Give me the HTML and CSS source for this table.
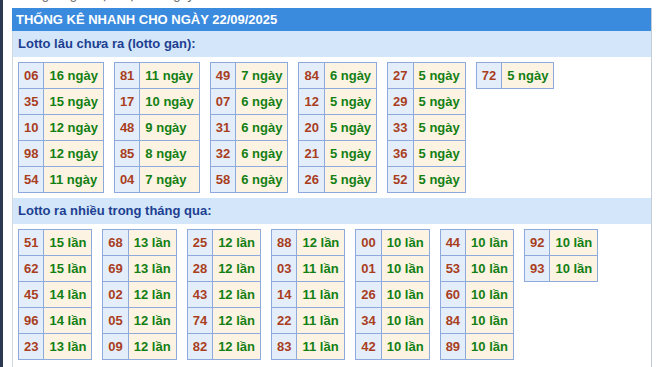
FILE: index.html
```html
<!DOCTYPE html>
<html lang="vi">
<head>
<meta charset="utf-8">
<title>Thống kê nhanh</title>
<link rel="stylesheet" href="styles.css">
</head>
<body>
<div class="page">
  <div class="sidebar"></div>
  <div class="main">
    <div class="topline"><span>Thống kê giải đặc biệt MB ngày</span></div>
    <div class="panel">
      <div class="panel-title">THỐNG KÊ NHANH CHO NGÀY 22/09/2025</div>
      <div class="sub-title">Lotto lâu chưa ra (lotto gan):</div>
      <div class="tables">
        <table class="lt"><tr><td class="n">06</td><td class="v">16 ngày</td></tr><tr><td class="n">35</td><td class="v">15 ngày</td></tr><tr><td class="n">10</td><td class="v">12 ngày</td></tr><tr><td class="n">98</td><td class="v">12 ngày</td></tr><tr><td class="n">54</td><td class="v">11 ngày</td></tr></table>
        <table class="lt"><tr><td class="n">81</td><td class="v">11 ngày</td></tr><tr><td class="n">17</td><td class="v">10 ngày</td></tr><tr><td class="n">48</td><td class="v">9 ngày</td></tr><tr><td class="n">85</td><td class="v">8 ngày</td></tr><tr><td class="n">04</td><td class="v">7 ngày</td></tr></table>
        <table class="lt"><tr><td class="n">49</td><td class="v">7 ngày</td></tr><tr><td class="n">07</td><td class="v">6 ngày</td></tr><tr><td class="n">31</td><td class="v">6 ngày</td></tr><tr><td class="n">32</td><td class="v">6 ngày</td></tr><tr><td class="n">58</td><td class="v">6 ngày</td></tr></table>
        <table class="lt"><tr><td class="n">84</td><td class="v">6 ngày</td></tr><tr><td class="n">12</td><td class="v">5 ngày</td></tr><tr><td class="n">20</td><td class="v">5 ngày</td></tr><tr><td class="n">21</td><td class="v">5 ngày</td></tr><tr><td class="n">26</td><td class="v">5 ngày</td></tr></table>
        <table class="lt"><tr><td class="n">27</td><td class="v">5 ngày</td></tr><tr><td class="n">29</td><td class="v">5 ngày</td></tr><tr><td class="n">33</td><td class="v">5 ngày</td></tr><tr><td class="n">36</td><td class="v">5 ngày</td></tr><tr><td class="n">52</td><td class="v">5 ngày</td></tr></table>
        <table class="lt"><tr><td class="n">72</td><td class="v">5 ngày</td></tr></table>
      </div>
      <div class="sub-title">Lotto ra nhiều trong tháng qua:</div>
      <div class="tables">
        <table class="lt"><tr><td class="n">51</td><td class="v">15 lần</td></tr><tr><td class="n">62</td><td class="v">15 lần</td></tr><tr><td class="n">45</td><td class="v">14 lần</td></tr><tr><td class="n">96</td><td class="v">14 lần</td></tr><tr><td class="n">23</td><td class="v">13 lần</td></tr></table>
        <table class="lt"><tr><td class="n">68</td><td class="v">13 lần</td></tr><tr><td class="n">69</td><td class="v">13 lần</td></tr><tr><td class="n">02</td><td class="v">12 lần</td></tr><tr><td class="n">05</td><td class="v">12 lần</td></tr><tr><td class="n">09</td><td class="v">12 lần</td></tr></table>
        <table class="lt"><tr><td class="n">25</td><td class="v">12 lần</td></tr><tr><td class="n">28</td><td class="v">12 lần</td></tr><tr><td class="n">43</td><td class="v">12 lần</td></tr><tr><td class="n">74</td><td class="v">12 lần</td></tr><tr><td class="n">82</td><td class="v">12 lần</td></tr></table>
        <table class="lt"><tr><td class="n">88</td><td class="v">12 lần</td></tr><tr><td class="n">03</td><td class="v">11 lần</td></tr><tr><td class="n">14</td><td class="v">11 lần</td></tr><tr><td class="n">22</td><td class="v">11 lần</td></tr><tr><td class="n">83</td><td class="v">11 lần</td></tr></table>
        <table class="lt"><tr><td class="n">00</td><td class="v">10 lần</td></tr><tr><td class="n">01</td><td class="v">10 lần</td></tr><tr><td class="n">26</td><td class="v">10 lần</td></tr><tr><td class="n">34</td><td class="v">10 lần</td></tr><tr><td class="n">42</td><td class="v">10 lần</td></tr></table>
        <table class="lt"><tr><td class="n">44</td><td class="v">10 lần</td></tr><tr><td class="n">53</td><td class="v">10 lần</td></tr><tr><td class="n">60</td><td class="v">10 lần</td></tr><tr><td class="n">84</td><td class="v">10 lần</td></tr><tr><td class="n">89</td><td class="v">10 lần</td></tr></table>
        <table class="lt"><tr><td class="n">92</td><td class="v">10 lần</td></tr><tr><td class="n">93</td><td class="v">10 lần</td></tr></table>
      </div>
    </div>
  </div>
</div>
</body>
</html>
```

FILE: styles.css
```css
html, body {
  margin: 0;
  padding: 0;
  background: #ffffff;
  height: 100%;
  overflow: hidden;
}

body {
  font-family: "Liberation Sans", Arial, sans-serif;
  font-size: 13px;
}

.page {
  display: flex;
  min-height: 367px;
}

.sidebar {
  width: 3px;
  flex: 0 0 3px;
  background: #2c3952;
}

.main {
  flex: 0 0 640px;
  padding-left: 9px;
}

.topline {
  height: 8px;
  overflow: hidden;
  color: #666;
  font-size: 13px;
}

.topline span {
  display: block;
  line-height: 15px;
  margin-top: -13px;
}

.panel {
  border-left: 1px solid #cfd8e3;
  border-right: 1px solid #c3ccd8;
  min-height: 367px;
}

.panel-title {
  background: #3a8ade;
  color: #ffffff;
  font-weight: bold;
  font-size: 13px;
  height: 23px;
  line-height: 23px;
  padding-left: 4px;
  margin-left: -1px;
}

.sub-title {
  background: #d4e7fa;
  color: #1d3f91;
  font-weight: bold;
  font-size: 13px;
  height: 26px;
  line-height: 26px;
  padding-left: 5px;
}

.tables {
  display: flex;
  align-items: flex-start;
  gap: 10px;
  padding: 5px 5px 5px 5px;
}

.lt {
  border-collapse: collapse;
}

.lt td {
  border: 1px solid #8eaadd;
  padding: 0 5px;
  height: 25px;
  line-height: 25px;
  font-weight: bold;
  font-size: 13px;
  white-space: nowrap;
}

.lt .n {
  background: #e4eefb;
  color: #a93e1e;
  text-align: center;
}

.lt .v {
  background: #fdf3e2;
  color: #137f14;
}
```
